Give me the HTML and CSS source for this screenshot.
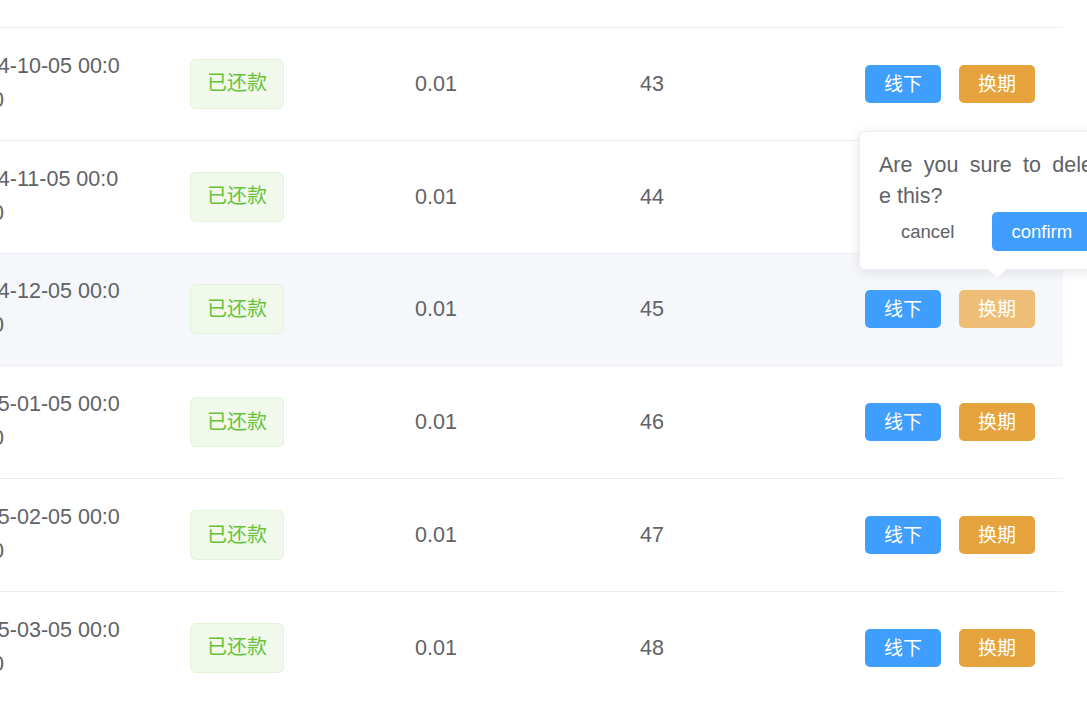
FILE: index.html
```html
<!DOCTYPE html>
<html lang="zh-CN">
<head>
<meta charset="utf-8">
<title>还款计划</title>
<link rel="stylesheet" href="styles.css">
</head>
<body>
<div class="page">
  <div class="table">
    <div class="row row-partial"></div>
    <div class="row">
      <div class="cell cell-date"><div class="date">2024-10-05 00:00:00</div></div>
      <div class="cell cell-status"><span class="tag">已还款</span></div>
      <div class="cell cell-num">0.01</div>
      <div class="cell cell-num">43</div>
      <div class="cell cell-ops"><button class="btn btn-primary">线下</button><button class="btn btn-warning">换期</button></div>
    </div>
    <div class="row">
      <div class="cell cell-date"><div class="date">2024-11-05 00:00:00</div></div>
      <div class="cell cell-status"><span class="tag">已还款</span></div>
      <div class="cell cell-num">0.01</div>
      <div class="cell cell-num">44</div>
      <div class="cell cell-ops"><button class="btn btn-primary">线下</button><button class="btn btn-warning">换期</button></div>
    </div>
    <div class="row is-hover">
      <div class="cell cell-date"><div class="date">2024-12-05 00:00:00</div></div>
      <div class="cell cell-status"><span class="tag">已还款</span></div>
      <div class="cell cell-num">0.01</div>
      <div class="cell cell-num">45</div>
      <div class="cell cell-ops"><button class="btn btn-primary">线下</button><button class="btn btn-warning is-active">换期</button></div>
    </div>
    <div class="row">
      <div class="cell cell-date"><div class="date">2025-01-05 00:00:00</div></div>
      <div class="cell cell-status"><span class="tag">已还款</span></div>
      <div class="cell cell-num">0.01</div>
      <div class="cell cell-num">46</div>
      <div class="cell cell-ops"><button class="btn btn-primary">线下</button><button class="btn btn-warning">换期</button></div>
    </div>
    <div class="row">
      <div class="cell cell-date"><div class="date">2025-02-05 00:00:00</div></div>
      <div class="cell cell-status"><span class="tag">已还款</span></div>
      <div class="cell cell-num">0.01</div>
      <div class="cell cell-num">47</div>
      <div class="cell cell-ops"><button class="btn btn-primary">线下</button><button class="btn btn-warning">换期</button></div>
    </div>
    <div class="row">
      <div class="cell cell-date"><div class="date">2025-03-05 00:00:00</div></div>
      <div class="cell cell-status"><span class="tag">已还款</span></div>
      <div class="cell cell-num">0.01</div>
      <div class="cell cell-num">48</div>
      <div class="cell cell-ops"><button class="btn btn-primary">线下</button><button class="btn btn-warning">换期</button></div>
    </div>
  </div>

  <div class="popover">
    <p class="pop-msg"><span class="pop-line">Are you sure to delet</span><span>e this?</span></p>
    <div class="pop-actions">
      <button class="pop-cancel">cancel</button>
      <button class="pop-confirm">confirm</button>
    </div>
  </div>
</div>
</body>
</html>
```

FILE: styles.css
```css
html, body {
  margin: 0;
  padding: 0;
  overflow: hidden;
  background: #fff;
}

.page {
  position: relative;
  width: 1087px;
  height: 702px;
  overflow: hidden;
  background: #fff;
  font-family: "Liberation Sans", "Noto Sans CJK SC", sans-serif;
  color: #606266;
}

.table {
  width: 1115px;
  margin-left: -52px;
}

.row {
  display: grid;
  grid-template-columns: 227px 155px 212px 220px 302px;
  align-items: center;
  height: 112.8px;
  box-sizing: border-box;
  border-bottom: 1px solid #ebeef5;
}

.row-partial {
  height: 28px;
}

.row.is-hover {
  background: #f5f7fa;
}

.cell {
  font-size: 21.5px;
  line-height: 34px;
}

.cell-date {
  padding-left: 14px;
}

.date {
  width: 162px;
  word-break: break-all;
  margin-top: -2px;
}

.cell-status {
  display: flex;
  padding-left: 15px;
}

.tag {
  display: inline-flex;
  align-items: center;
  height: 50px;
  padding: 0 16px 1px;
  box-sizing: border-box;
  border: 1px solid #e1f3d8;
  border-radius: 6px;
  background: #f0f9eb;
  color: #67c23a;
  font-size: 20px;
}

.cell-num {
  text-align: center;
}

.cell-ops {
  display: flex;
  gap: 18px;
  padding-left: 103px;
}

.btn {
  display: inline-flex;
  align-items: center;
  justify-content: center;
  width: 76px;
  height: 38px;
  padding: 0 0 3px;
  border: none;
  border-radius: 5px;
  color: #fff;
  font-family: inherit;
  font-size: 19px;
}

.btn-primary {
  background: #409eff;
}

.btn-warning {
  background: #e6a23c;
}

.btn-warning.is-active {
  background: #eebe77;
}

.popover {
  position: absolute;
  left: 859px;
  top: 131px;
  width: 276px;
  box-sizing: border-box;
  padding: 18px 20px 18px 19px;
  background: #fff;
  border: 1px solid #ebeef5;
  border-radius: 6px;
  box-shadow: 0 2px 12px 0 rgba(0, 0, 0, 0.1);
  font-size: 21.5px;
  line-height: 31px;
  color: #606266;
}

.popover::before,
.popover::after {
  content: "";
  position: absolute;
  left: 128px;
  width: 0;
  height: 0;
  border-style: solid;
  border-color: transparent;
  border-width: 9px 9px 0 9px;
}

.popover::before {
  bottom: -10px;
  border-top-color: #ebeef5;
}

.popover::after {
  bottom: -9px;
  border-top-color: #fff;
}

.pop-msg {
  margin: 0;
}

.pop-line {
  display: block;
  width: 220px;
  text-align: justify;
  text-align-last: justify;
}

.pop-actions {
  display: flex;
  align-items: center;
  gap: 16px;
}

.pop-cancel,
.pop-confirm {
  height: 39px;
  border: none;
  font-family: inherit;
  font-size: 18.5px;
}

.pop-cancel {
  padding: 0 22px;
  background: none;
  color: #606266;
}

.pop-confirm {
  padding: 0 19px;
  border-radius: 5px;
  background: #409eff;
  color: #fff;
}
```
